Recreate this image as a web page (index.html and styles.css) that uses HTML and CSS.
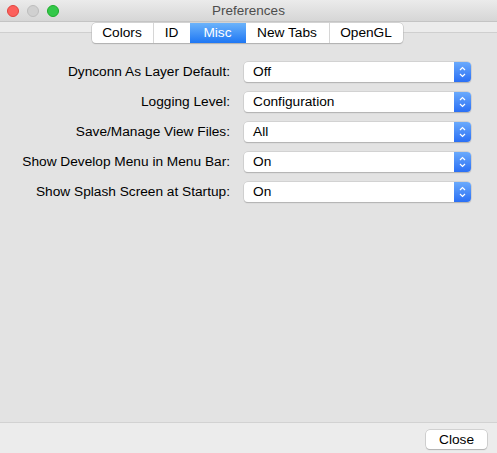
FILE: index.html
```html
<!DOCTYPE html>
<html>
<head>
<meta charset="utf-8">
<title>Preferences</title>
<link rel="stylesheet" href="styles.css">
</head>
<body>
<div class="window">
  <div class="titlebar">
    <div class="lights">
      <span class="light red"></span>
      <span class="light gray"></span>
      <span class="light green"></span>
    </div>
    <div class="title">Preferences</div>
  </div>
  <div class="tabstrip">
    <div class="tabs">
      <span class="tab w-colors">Colors</span>
      <span class="tab w-id">ID</span>
      <span class="tab w-misc active">Misc</span>
      <span class="tab w-new">New Tabs</span>
      <span class="tab w-gl">OpenGL</span>
    </div>
  </div>
  <div class="box">
    <div class="form">
      <div class="label">Dynconn As Layer Default:</div>
      <div class="popup"><span class="value">Off</span><span class="stepper"><svg width="9" height="14" viewBox="0 0 9 14"><path d="M2 5 L4.5 2.5 L7 5 M2 9 L4.5 11.5 L7 9" fill="none" stroke="#fff" stroke-width="1.2"/></svg></span></div>
      <div class="label">Logging Level:</div>
      <div class="popup"><span class="value">Configuration</span><span class="stepper"><svg width="9" height="14" viewBox="0 0 9 14"><path d="M2 5 L4.5 2.5 L7 5 M2 9 L4.5 11.5 L7 9" fill="none" stroke="#fff" stroke-width="1.2"/></svg></span></div>
      <div class="label">Save/Manage View Files:</div>
      <div class="popup"><span class="value">All</span><span class="stepper"><svg width="9" height="14" viewBox="0 0 9 14"><path d="M2 5 L4.5 2.5 L7 5 M2 9 L4.5 11.5 L7 9" fill="none" stroke="#fff" stroke-width="1.2"/></svg></span></div>
      <div class="label">Show Develop Menu in Menu Bar:</div>
      <div class="popup"><span class="value">On</span><span class="stepper"><svg width="9" height="14" viewBox="0 0 9 14"><path d="M2 5 L4.5 2.5 L7 5 M2 9 L4.5 11.5 L7 9" fill="none" stroke="#fff" stroke-width="1.2"/></svg></span></div>
      <div class="label">Show Splash Screen at Startup:</div>
      <div class="popup"><span class="value">On</span><span class="stepper"><svg width="9" height="14" viewBox="0 0 9 14"><path d="M2 5 L4.5 2.5 L7 5 M2 9 L4.5 11.5 L7 9" fill="none" stroke="#fff" stroke-width="1.2"/></svg></span></div>
    </div>
  </div>
  <div class="footer">
    <button class="btn">Close</button>
  </div>
</div>
</body>
</html>
```

FILE: styles.css
```css
html, body {
  margin: 0;
  padding: 0;
}
body {
  font-family: "Liberation Sans", Arial, sans-serif;
  font-size: 13.7px;
  color: #000;
  background: #ececec;
}
.window {
  width: 497px;
  height: 453px;
  display: flex;
  flex-direction: column;
  overflow: hidden;
}
.titlebar {
  height: 22px;
  box-sizing: border-box;
  background: linear-gradient(#ebebeb, #d6d6d6);
  border-bottom: 1px solid #c4c4c4;
  display: flex;
  align-items: center;
  position: relative;
}
.lights {
  display: flex;
  gap: 8px;
  padding-left: 7px;
  padding-top: 1px;
}
.light {
  width: 12px;
  height: 12px;
  border-radius: 50%;
  box-sizing: border-box;
}
.red { background: #fc605c; border: 1px solid #e0443e; }
.gray { background: #d0d0d0; border: 1px solid #bdbdbd; }
.green { background: #34c84a; border: 1px solid #1dad2b; }
.title {
  position: absolute;
  left: 0;
  right: 0;
  top: 3px;
  text-align: center;
  color: #4d4d4d;
  font-size: 13.5px;
}
.tabstrip {
  background: #ececec;
  height: 10px;
  display: flex;
  justify-content: center;
  position: relative;
  z-index: 2;
}
.tabs {
  display: flex;
  height: 20px;
  margin-top: 1px;
  margin-left: -3px;
  box-sizing: border-box;
  background: #fff;
  border-radius: 4px;
  box-shadow: 0 0 0 0.5px #b8b8b8, 0 1px 1px rgba(0,0,0,0.25);
}
.tab {
  display: flex;
  align-items: center;
  justify-content: center;
  box-sizing: border-box;
  border-left: 1px solid #d6d6d6;
  line-height: 20px;
}
.tab:first-child { border-left: none; border-radius: 4px 0 0 4px; }
.tab:last-child { border-radius: 0 4px 4px 0; }
.tab.active {
  background: linear-gradient(#6cb3fa, #1e77f4);
  color: #fff;
  border-left: none;
}
.tab.active + .tab { border-left: none; }
.w-colors { width: 61px; }
.w-id { width: 37px; }
.w-misc { width: 56px; }
.w-new { width: 83px; }
.w-gl { width: 74px; }
.box {
  flex: 1;
  background: #e3e3e3;
  border-top: 1px solid #cfcfcf;
  border-bottom: 1px solid #d2d2d2;
}
.form {
  display: grid;
  grid-template-columns: 230px 227px;
  column-gap: 14px;
  row-gap: 10px;
  padding-top: 29px;
}
.label {
  text-align: right;
  height: 20px;
  line-height: 20px;
  white-space: nowrap;
}
.popup {
  height: 20px;
  display: flex;
  background: #fff;
  border-radius: 4px;
  box-shadow: 0 0 0 0.5px #c2c2c2, 0 1px 1px rgba(0,0,0,0.28);
  overflow: hidden;
}
.value {
  flex: 1;
  padding-left: 9px;
  line-height: 20px;
}
.stepper {
  width: 17px;
  display: flex;
  align-items: center;
  justify-content: center;
  background: linear-gradient(#6aaafc, #2a6ff5);
}
.footer {
  height: 30px;
  display: flex;
  justify-content: flex-end;
  align-items: center;
  padding-right: 10px;
  padding-top: 3px;
  box-sizing: border-box;
}
.btn {
  width: 61px;
  height: 19px;
  padding: 0;
  font-family: "Liberation Sans", Arial, sans-serif;
  font-size: 13.7px;
  background: #fff;
  border: none;
  border-radius: 4px;
  box-shadow: 0 0 0 0.5px #b5b5b5, 0 1px 1px rgba(0,0,0,0.25);
  color: #000;
}
```
